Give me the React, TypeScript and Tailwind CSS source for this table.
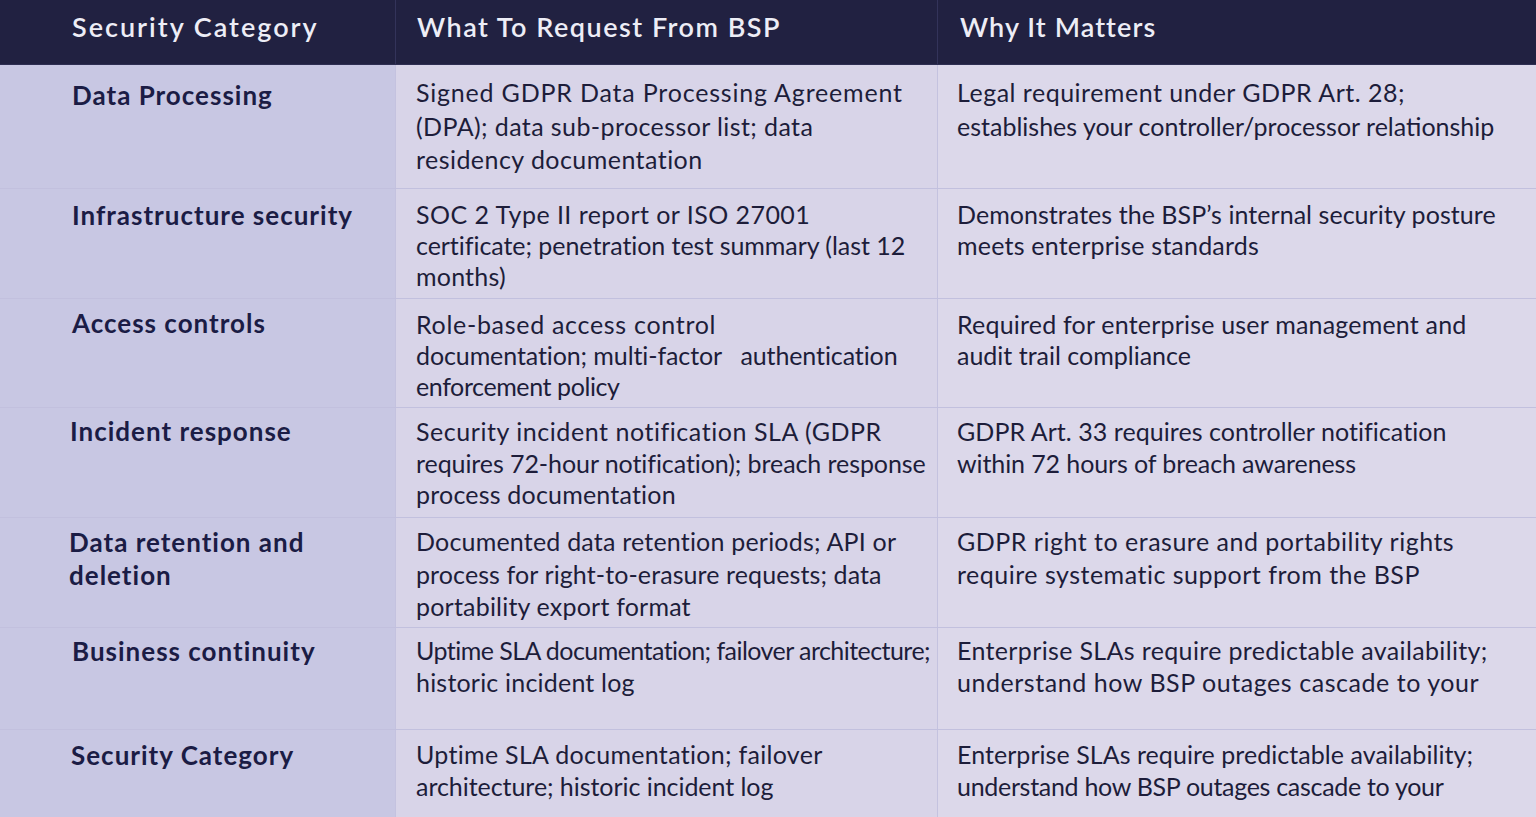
type Line = string | [string, string];

const rows: {
  h: string;
  pl: string;
  catPt: string;
  pt: string;
  lead: string;
  cat: Line[];
  req: Line[];
  why: Line[];
}[] = [
  {
    h: 'h-[124px]',
    pl: 'pl-[72px]',
    catPt: 'pt-[14px]',
    pt: 'pt-[11px]',
    lead: 'leading-[33.5px]',
    cat: ['Data Processing'],
    req: [
      ['Signed GDPR Data Processing Agreement', 'tracking-[0.8px]'],
      ['(DPA); data sub-processor list; data', 'tracking-[0.4px]'],
      ['residency documentation', 'tracking-[0.45px]'],
    ],
    why: [
      ['Legal requirement under GDPR Art. 28;', 'tracking-[0.5px]'],
      ['establishes your controller/processor relationship', 'tracking-[0px]'],
    ],
  },
  {
    h: 'h-[110px]',
    pl: 'pl-[72px]',
    catPt: 'pt-[11px]',
    pt: 'pt-[10px]',
    lead: 'leading-[31px]',
    cat: ['Infrastructure security'],
    req: [
      ['SOC 2 Type II report or ISO 27001', 'tracking-[0.45px]'],
      ['certificate; penetration test summary (last 12', 'tracking-[-0.05px]'],
      'months)',
    ],
    why: [
      ['Demonstrates the BSP’s internal security posture', 'tracking-[0.05px]'],
      'meets enterprise standards',
    ],
  },
  {
    h: 'h-[109px]',
    pl: 'pl-[72px]',
    catPt: 'pt-[9px]',
    pt: 'pt-[10px]',
    lead: 'leading-[31px]',
    cat: ['Access controls'],
    req: [
      ['Role-based access control', 'tracking-[0.7px]'],
      ['documentation; multi-factor\u00a0\u00a0\u00a0authentication', 'tracking-[-0.1px]'],
      ['enforcement policy', 'tracking-[-0.4px]'],
    ],
    why: ['Required for enterprise user management and', ['audit trail compliance', 'tracking-[0px]']],
  },
  {
    h: 'h-[110px]',
    pl: 'pl-[70px]',
    catPt: 'pt-[8px]',
    pt: 'pt-[8px]',
    lead: 'leading-[31.5px]',
    cat: ['Incident response'],
    req: [
      ['Security incident notification SLA (GDPR', 'tracking-[0.55px]'],
      ['requires 72-hour notification); breach response', 'tracking-[-0.08px]'],
      'process documentation',
    ],
    why: [
      ['GDPR Art. 33 requires controller notification', 'tracking-[0.05px]'],
      ['within 72 hours of breach awareness', 'tracking-[-0.1px]'],
    ],
  },
  {
    h: 'h-[110px]',
    pl: 'pl-[69px]',
    catPt: 'pt-[8px]',
    pt: 'pt-[7px]',
    lead: 'leading-[32.5px]',
    cat: ['Data retention and', 'deletion'],
    req: [
      'Documented data retention periods; API or',
      ['process for right-to-erasure requests; data', 'tracking-[0.1px]'],
      'portability export format',
    ],
    why: [
      ['GDPR right to erasure and portability rights', 'tracking-[0.5px]'],
      ['require systematic support from the BSP', 'tracking-[0.5px]'],
    ],
  },
  {
    h: 'h-[102px]',
    pl: 'pl-[72px]',
    catPt: 'pt-[7px]',
    pt: 'pt-[6px]',
    lead: 'leading-[32px]',
    cat: ['Business continuity'],
    req: [['Uptime SLA documentation; failover architecture;', 'tracking-[-0.55px]'], 'historic incident log'],
    why: [
      ['Enterprise SLAs require predictable availability;', 'tracking-[0.35px]'],
      ['understand how BSP outages cascade to your', 'tracking-[0.55px]'],
    ],
  },
  {
    h: 'h-[90px]',
    pl: 'pl-[71px]',
    catPt: 'pt-[9px]',
    pt: 'pt-[8px]',
    lead: 'leading-[32px]',
    cat: ['Security Category'],
    req: [
      ['Uptime SLA documentation; failover', 'tracking-[0.3px]'],
      ['architecture; historic incident log', 'tracking-[-0.05px]'],
    ],
    why: [
      ['Enterprise SLAs require predictable availability;', 'tracking-[0.05px]'],
      ['understand how BSP outages cascade to your', 'tracking-[-0.3px]'],
    ],
  },
];

function Lines({ lines }: { lines: Line[] }) {
  return (
    <>
      {lines.map((l, i) => {
        const [text, tr] = typeof l === 'string' ? [l, 'tracking-[0.2px]'] : l;
        return (
          <div key={i} className={`whitespace-nowrap ${tr}`}>
            {text}
          </div>
        );
      })}
    </>
  );
}

export default function App() {
  return (
    <div
      className="w-[1536px] h-[817px] overflow-hidden bg-[#d9d5e9]"
      style={{ fontFamily: 'Lato, "Open Sans", sans-serif' }}
    >
      {/* header */}
      <div className="grid grid-cols-[395px_542px_599px] h-[65px] bg-[#212141] text-[#ededf6] text-[27px] font-semibold leading-[32px] border-b border-[#2e2e52]">
        <div className="pl-[72px] pt-[11px] tracking-[2px]">Security Category</div>
        <div className="pl-[21px] pt-[11px] tracking-[1.5px] border-l border-[#33335a]">What To Request From BSP</div>
        <div className="pl-[22px] pt-[11px] tracking-[1.1px] border-l border-[#33335a]">Why It Matters</div>
      </div>

      {rows.map((r, i) => (
        <div
          key={i}
          className={`grid grid-cols-[395px_542px_599px] ${r.h} border-b border-[#c2c0de] ${r.lead}`}
        >
          <div className={`bg-[#c8c7e3] ${r.pl} ${r.catPt} text-[26px] tracking-[1px] font-bold text-[#1b1c45]`}>
            {r.cat.map((c, j) => (
              <div key={j} className="whitespace-nowrap">
                {c as string}
              </div>
            ))}
          </div>
          <div className={`bg-[#d8d4e8] pl-[20px] ${r.pt} border-l border-[#c4c2df] text-[25px] text-[#1d1d3a]`}>
            <Lines lines={r.req} />
          </div>
          <div className={`bg-[#dcd8ea] pl-[19px] ${r.pt} border-l border-[#c4c2df] text-[25px] text-[#1d1d3a]`}>
            <Lines lines={r.why} />
          </div>
        </div>
      ))}
    </div>
  );
}
